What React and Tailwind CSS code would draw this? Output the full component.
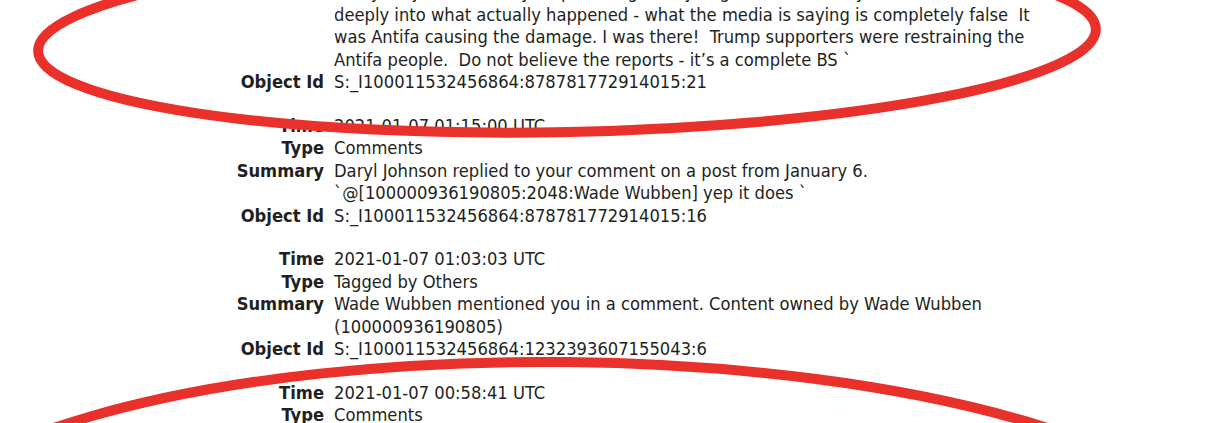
import React from 'react';

const entries = [
  {
    time: null,
    type: null,
    summary: [
      'Wade Wubben commented on a post from January 6.',
      '`@[100000936190805:2048:Wade Wubben] I agree with you',
      'Everybody should really stop and dig, and you go and look really',
      'deeply into what actually happened - what the media is saying is completely false  It',
      'was Antifa causing the damage. I was there!  Trump supporters were restraining the',
      'Antifa people.  Do not believe the reports - it\u2019s a complete BS `',
    ],
    objectId: 'S:_I100011532456864:878781772914015:21',
  },
  {
    time: '2021-01-07 01:15:00 UTC',
    type: 'Comments',
    summary: [
      'Daryl Johnson replied to your comment on a post from January 6.',
      '`@[100000936190805:2048:Wade Wubben] yep it does `',
    ],
    objectId: 'S:_I100011532456864:878781772914015:16',
  },
  {
    time: '2021-01-07 01:03:03 UTC',
    type: 'Tagged by Others',
    summary: [
      'Wade Wubben mentioned you in a comment. Content owned by Wade Wubben',
      '(100000936190805)',
    ],
    objectId: 'S:_I100011532456864:1232393607155043:6',
  },
  {
    time: '2021-01-07 00:58:41 UTC',
    type: 'Comments',
    summary: ['Daryl Johnson commented on a post from January 6.'],
    objectId: 'S:_I100011532456864:1232393607155043:2',
  },
];

const Row = ({ label, children }) => (
  <>
    <div className="text-right font-bold">{label}</div>
    <div>{children}</div>
  </>
);

const Entry = ({ entry }) => (
  <div className="grid grid-cols-[324px_800px] gap-x-[10px] mb-[21px]">
    {entry.time && <Row label="Time">{entry.time}</Row>}
    {entry.type && <Row label="Type">{entry.type}</Row>}
    <Row label="Summary">
      {entry.summary.map((line, i) => (
        <span key={i} className="block whitespace-pre">{line}</span>
      ))}
    </Row>
    <Row label="Object Id">{entry.objectId}</Row>
  </div>
);

export default function App() {
  return (
    <div className="relative w-[1210px] h-[423px] overflow-hidden bg-white">
      {/* document text */}
      <div
        className="mt-[-64px] text-[18.2px] leading-[22.5px] text-[#231f20] font-stretch-condensed"
        style={{ fontFamily: '"DejaVu Sans Condensed", "DejaVu Sans", sans-serif' }}
      >
        {entries.map((e, i) => (
          <Entry key={i} entry={e} />
        ))}
      </div>

      {/* red marker circles drawn over the page */}
      <svg className="absolute inset-0 pointer-events-none" width="1210" height="423" viewBox="0 0 1210 423">
        <ellipse
          cx="567" cy="40" rx="529" ry="92"
          transform="rotate(-1.2 567 40)"
          fill="none" stroke="#e9302a" strokeWidth="10"
        />
        <ellipse
          cx="565" cy="564" rx="672" ry="202"
          transform="rotate(0.6 565 564)"
          fill="none" stroke="#e9302a" strokeWidth="10"
        />
      </svg>
    </div>
  );
}
